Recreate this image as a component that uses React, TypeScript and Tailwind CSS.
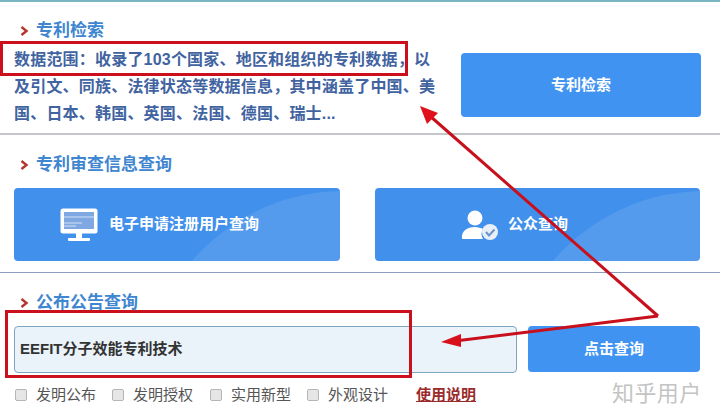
const CJK = `font-['Liberation_Sans','Noto_Sans_CJK_SC',sans-serif]`

function Heading({ text, className }: { text: string; className?: string }) {
  return (
    <div className={`flex items-center h-6 pl-5 ${className ?? ''}`}>
      <svg width="9" height="10" viewBox="0 0 9 10" className="mr-[7px]">
        <path d="M1.5 1 L6.5 5 L1.5 9" fill="none" stroke="#b5352c" strokeWidth="2.4" />
      </svg>
      <span className="text-[17px] leading-6 font-bold text-[#3f86d0]">{text}</span>
    </div>
  )
}

function Arc() {
  return (
    <div className="absolute left-[130px] top-[3px] w-[400px] h-[400px] rounded-full bg-white/10" />
  )
}

function MonitorIcon() {
  return (
    <svg width="38" height="33" viewBox="0 0 38 33">
      <rect x="0.5" y="0.5" width="37" height="25" rx="2.5" fill="#fff" />
      <rect x="4" y="4" width="30" height="17" fill="#7fa8e2" />
      <path d="M4 9h30M4 15h18M4 18h12" stroke="#d5e2f6" strokeWidth="1.2" />
      <rect x="16" y="25" width="6" height="5" fill="#fff" />
      <rect x="8" y="30" width="22" height="3" rx="1" fill="#fff" />
    </svg>
  )
}

function UserCheckIcon() {
  return (
    <svg width="38" height="30" viewBox="0 0 38 30">
      <circle cx="14" cy="8" r="7.5" fill="#fff" />
      <path d="M1 29 C0 21 6 17 14 17 C17 17 20 18 22 19 C20 22 20 26 22 29 Z" fill="#fff" />
      <circle cx="29" cy="22" r="8" fill="#e9eff8" />
      <path d="M25 22 L28 25.5 L33.5 19.5" fill="none" stroke="#6c93c8" strokeWidth="2" />
    </svg>
  )
}

function Option({ label, className }: { label: string; className: string }) {
  return (
    <label className={`flex items-center ${className}`}>
      <span className="w-3 h-3 rounded-[2px] border border-[#b5b5b5] bg-[#e6e6e6] mr-[9px]" />
      <span className="text-[15px] leading-5 text-[#555]">{label}</span>
    </label>
  )
}

export default function App() {
  return (
    <div lang="zh-CN" className={`relative w-[720px] h-[418px] overflow-hidden bg-white ${CJK}`}>
      <div className="h-[2px] bg-[#79b5c2]" />

      <section className="h-[133px] pt-[17px] border-b-2 border-[#c4c6c9]">
        <Heading text="专利检索" />
        <div className="flex mt-[-7px]">
          <p className="w-[432px] ml-[14px] pt-[10px] text-[16px] leading-[27px] font-bold text-[#41639f] tracking-[0.2px]">
            {'数据范围\uFF1A收录了103个国家、地区和组织的专利数据\uFF0C以及引文、同族、法律状态等数据信息\uFF0C其中涵盖了中国、美国、日本、韩国、英国、法国、德国、瑞士...'}
          </p>
          <button className="ml-[15px] mt-[17px] w-[240px] h-[64px] rounded bg-[#4193f2] text-white text-[15px] font-bold">
            专利检索
          </button>
        </div>
      </section>

      <section className="h-[138px] pt-[18px] border-b border-[#8d9cc0]">
        <Heading text="专利审查信息查询" />
        <div className="flex gap-[35px] ml-[14px] mt-[11px]">
          <button className="relative overflow-hidden flex items-center w-[326px] h-[73px] pl-[46px] rounded bg-[#4190ec] text-white text-[15px] font-bold">
            <Arc />
            <span className="relative mr-[11px] flex"><MonitorIcon /></span>
            <span className="relative">电子申请注册用户查询</span>
          </button>
          <button className="relative overflow-hidden flex items-center w-[325px] h-[73px] pl-[86px] rounded bg-[#4190ec] text-white text-[15px] font-bold">
            <Arc />
            <span className="relative mr-[9px] flex"><UserCheckIcon /></span>
            <span className="relative">公众查询</span>
          </button>
        </div>
      </section>

      <section className="pt-[18px]">
        <Heading text="公布公告查询" />
        <div className="flex ml-[14px] mt-[11px]">
          <div className="flex items-center w-[503px] h-[47px] pl-[5px] rounded border border-[#7ea4c0] bg-[#ebf3fa] text-[15px] font-bold text-[#333]">
            EEFIT分子效能专利技术
          </div>
          <button className="ml-[11px] w-[172px] h-[46px] rounded bg-[#4193f2] text-white text-[15px] font-bold">
            点击查询
          </button>
        </div>
        <div className="flex items-center ml-[15px] mt-[12px]">
          <Option label="发明公布" className="w-[97px]" />
          <Option label="发明授权" className="w-[98px]" />
          <Option label="实用新型" className="w-[97px]" />
          <Option label="外观设计" className="w-[109px]" />
          <a className="text-[15px] leading-5 font-bold text-[#9b2b2b] underline">使用说明</a>
        </div>
      </section>

      {/* red annotations on top of the page */}
      <div className="absolute left-0 top-[41px] w-[408px] h-[35px] border-[3px] border-[#cc0f1c]" />
      <div className="absolute left-[5px] top-[310px] w-[407px] h-[68px] border-[3px] border-[#cc0f1c]" />
      <svg className="absolute left-0 top-0" width="720" height="418" viewBox="0 0 720 418">
        <path d="M658 316 L430 116" stroke="#c8101c" strokeWidth="3" fill="none" />
        <path d="M658 316 L455 341" stroke="#c8101c" strokeWidth="3" fill="none" />
        <path d="M420 106 L438 113 L427 124 Z" fill="#e0101c" />
        <path d="M441 342 L461 334 L461 347 Z" fill="#d8101c" />
      </svg>

      <span className="absolute left-[612px] top-[379px] text-[22px] leading-[30px] tracking-[0.4px] text-[#c4c4c4] font-normal">
        知乎用户
      </span>
    </div>
  )
}
